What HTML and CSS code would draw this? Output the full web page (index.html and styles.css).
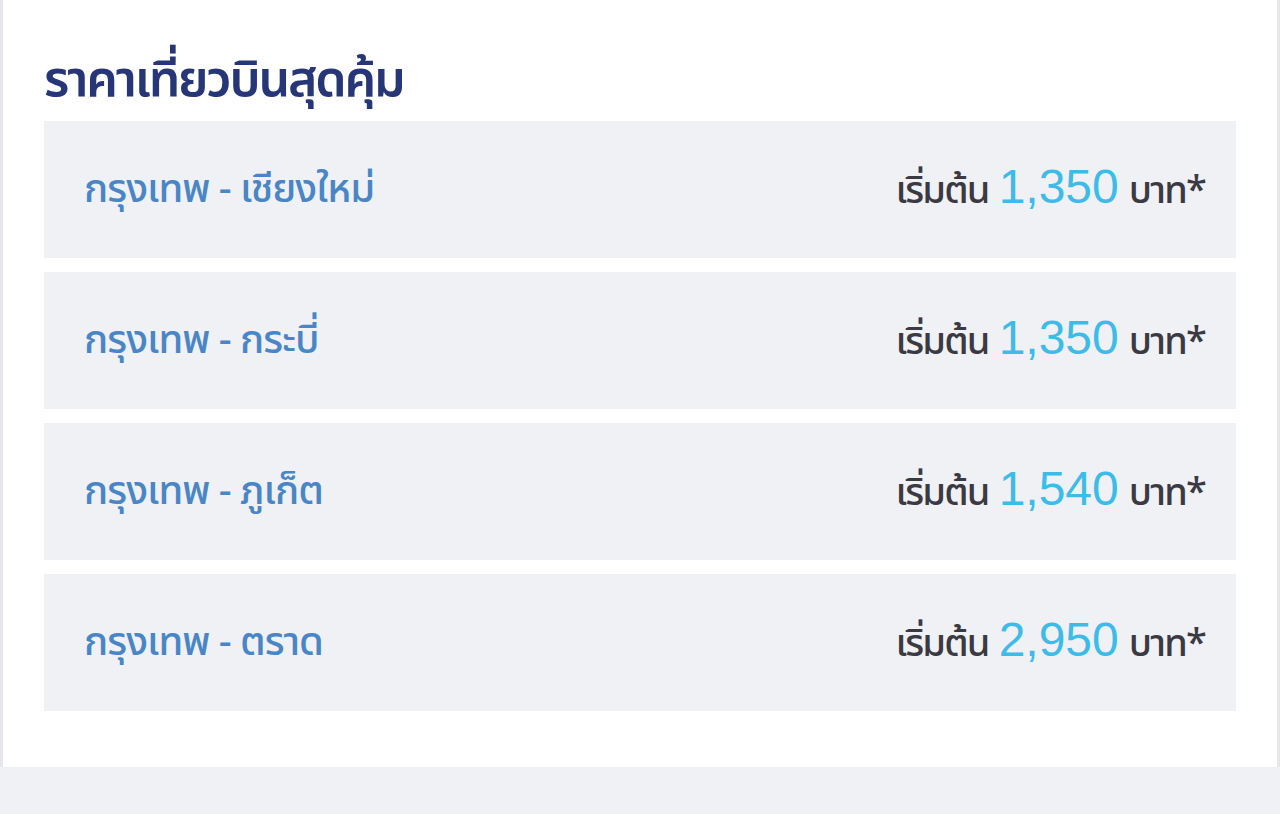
FILE: index.html
```html
<!DOCTYPE html>
<html lang="th">
<head>
<meta charset="utf-8">
<link rel="stylesheet" href="styles.css">
</head>
<body>
<div class="page">
  <section class="panel">
    <h2 class="title">ราคาเที่ยวบินสุดคุ้ม</h2>
    <ul class="routes">
      <li class="route"><span class="name">กรุงเทพ - เชียงใหม่</span><span class="price"><span class="lbl">เริ่มต้น</span><span class="num">1,350</span><span class="lbl">บาท*</span></span></li>
      <li class="route"><span class="name">กรุงเทพ - กระบี่</span><span class="price"><span class="lbl">เริ่มต้น</span><span class="num">1,350</span><span class="lbl">บาท*</span></span></li>
      <li class="route"><span class="name">กรุงเทพ - ภูเก็ต</span><span class="price"><span class="lbl">เริ่มต้น</span><span class="num">1,540</span><span class="lbl">บาท*</span></span></li>
      <li class="route"><span class="name">กรุงเทพ - ตราด</span><span class="price"><span class="lbl">เริ่มต้น</span><span class="num">2,950</span><span class="lbl">บาท*</span></span></li>
    </ul>
  </section>
</div>
</body>
</html>
```

FILE: styles.css
```css
html, body {
  margin: 0;
  padding: 0;
}
body {
  background: #f0f1f5;
  font-family: "Noto Sans Thai", "Noto Sans", "Liberation Sans", sans-serif;
  width: 1280px;
  height: 814px;
  overflow: hidden;
}
.page {
  padding: 0 3px;
}
.panel {
  background: #ffffff;
  border-left: 3px solid #e6e7eb;
  border-right: 3px solid #e6e7eb;
  margin: 0 -3px;
  padding: 50px 41px 55px 41px;
  box-sizing: border-box;
  height: 767px;
}
.title {
  margin: 0 0 8px;
  font-weight: 600;
  font-size: 50px;
  line-height: 63px;
  color: #263677;
  letter-spacing: -2.2px;
}
.routes {
  list-style: none;
  margin: 0;
  padding: 0;
  display: flex;
  flex-direction: column;
  gap: 14px;
}
.route {
  background: #f0f1f5;
  height: 137px;
  display: flex;
  align-items: center;
  justify-content: space-between;
  padding: 0 31px 0 40px;
}
.name {
  color: #4a86c6;
  font-size: 40px;
  font-weight: 500;
  letter-spacing: -1px;
}
.price {
  display: flex;
  align-items: baseline;
  gap: 10px;
}
.lbl {
  color: #3b3a42;
  font-size: 38px;
  font-weight: 500;
  letter-spacing: -1.8px;
}
.num {
  color: #3dbbe9;
  font-family: "Liberation Sans", Arial, sans-serif;
  font-size: 48px;
}
```
